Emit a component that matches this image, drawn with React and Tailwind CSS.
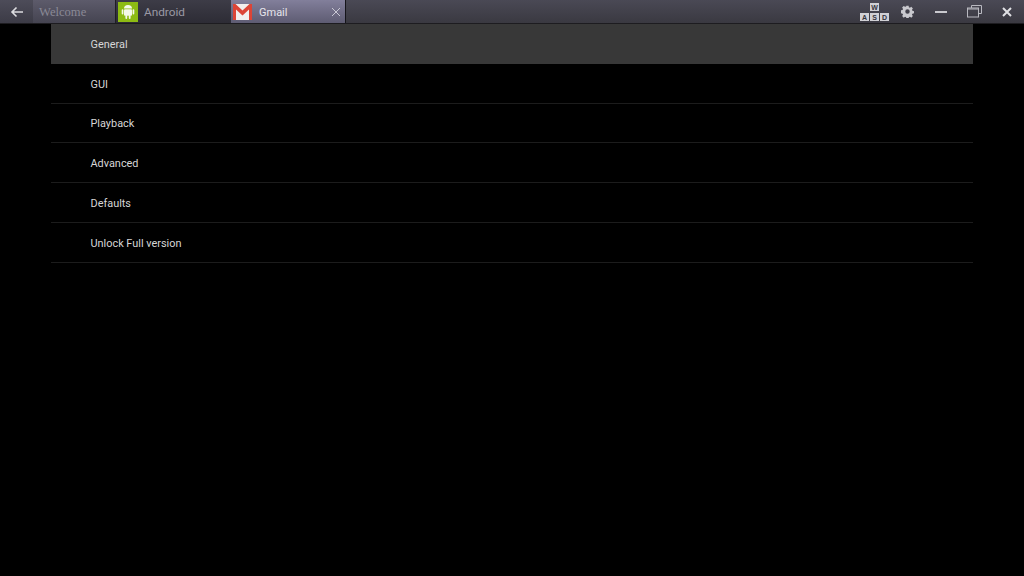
import React from "react";

const rows = ["General", "GUI", "Playback", "Advanced", "Defaults", "Unlock Full version"];

function Android() {
  return (
    <svg width="14" height="16" viewBox="0 0 14 16" fill="#f4f8e8">
      <path d="M3 4.600a4 3.600 0 0 1 8 0z" />
      <rect x="3" y="5.200" width="8" height="6.600" rx="1" />
      <rect x="0.700" y="5.200" width="1.700" height="5.200" rx="0.850" />
      <rect x="11.600" y="5.200" width="1.700" height="5.200" rx="0.850" />
      <rect x="4.400" y="11" width="1.800" height="4" rx="0.900" />
      <rect x="7.800" y="11" width="1.800" height="4" rx="0.900" />
    </svg>
  );
}

function Gmail() {
  return (
    <svg width="19" height="16" viewBox="0 0 19 16">
      <rect x="0" y="0" width="19" height="16" fill="#f2eeee" />
      <path d="M0 0h2.500L9.500 6.500 16.500 0H19v16h-3V5.500L9.500 11.500 3 5.500V16H0z" fill="#dc4437" />
    </svg>
  );
}

function Key({ children }) {
  return (
    <span className="flex h-[8px] w-[9px] items-center justify-center bg-[#d0d0d4] text-[7px] font-bold leading-none text-[#33323a] [font-family:'Liberation_Sans',sans-serif]">
      {children}
    </span>
  );
}

export default function App() {
  return (
    <div className="flex h-[576px] w-[1024px] flex-col overflow-hidden bg-black [font-family:Roboto,sans-serif]">
      <header className="flex h-[24px] shrink-0 items-stretch border-b border-[#1d1c20] bg-gradient-to-b from-[#4a4955] to-[#3a3941]">
        <div className="flex w-[33px] items-center justify-center bg-gradient-to-b from-[#4d4c59] to-[#3c3b46]">
          <svg width="14" height="12" viewBox="0 0 14 12" fill="none" stroke="#dcdce0" strokeWidth="1.600">
            <path d="M13 6H2M6.500 1.500 2 6l4.500 4.500" />
          </svg>
        </div>
        <div className="flex w-[82px] items-center bg-gradient-to-b from-[#5d5b6b] to-[#454451] pl-[6px] pt-[2px] text-[12.600px] text-[#8a8996] [font-family:'Liberation_Serif',serif]">
          Welcome
        </div>
        <div className="flex w-[116px] items-center gap-[6px] border-l border-[#1f1e24] bg-gradient-to-b from-[#3d3c47] to-[#2d2c35] pl-[2px] text-[11.800px] text-[#9a99a4]">
          <span className="flex h-[20px] w-[20px] items-center justify-center bg-[#8dbb13]">
            <Android />
          </span>
          <span className="pt-[2px]">Android</span>
        </div>
        <div className="flex w-[115px] items-center border-r border-[#15151a] bg-gradient-to-b from-[#827f9b] to-[#5e5c72] pl-[2px] pr-[4px] text-[11px] text-[#e6e6ec]">
          <Gmail />
          <span className="ml-[7px] flex-1 pt-[3px]">Gmail</span>
          <svg width="10" height="10" viewBox="0 0 10 10" stroke="#c9c8d4" strokeWidth="1">
            <path d="M1 1l8 8M9 1l-8 8" />
          </svg>
        </div>
        <div className="flex-1" />
        <div className="flex w-[164px] items-center">
          <div className="flex w-[29px] flex-col items-center gap-[2px] pt-[1px]">
            <Key>W</Key>
            <div className="flex gap-[1px]">
              <Key>A</Key>
              <Key>S</Key>
              <Key>D</Key>
            </div>
          </div>
          <svg className="ml-[12px]" width="13" height="13" viewBox="0 0 14 14">
            <path
              fill="#c9c9ce"
              fillRule="evenodd"
              d="M5.800.800h2.400l.3 1.700 1.100.5 1.500-1 1.700 1.700-1 1.500.5 1.100 1.700.3v2.400l-1.700.3-.5 1.100 1 1.500-1.700 1.700-1.500-1-1.100.5-.3 1.700H5.800l-.3-1.700-1.100-.5-1.500 1-1.700-1.700 1-1.500-.5-1.100-1.700-.3V5.600l1.700-.3.5-1.100-1-1.500 1.700-1.700 1.500 1 1.100-.5zM7 4.600a2.400 2.400 0 1 0 0 4.800 2.400 2.400 0 0 0 0-4.800z"
            />
          </svg>
          <span className="ml-[21px] h-[2px] w-[12px] bg-[#c9c9ce]" />
          <svg className="ml-[20px]" width="15" height="13" viewBox="0 0 15 13" fill="none" stroke="#b9b9c0" strokeWidth="1">
            <path d="M4.500 3V.5h10v8H12" />
            <rect x="0.500" y="3" width="11" height="9" />
            <path d="M1 4h10" />
          </svg>
          <svg className="ml-[20px]" width="10" height="10" viewBox="0 0 10 10" stroke="#e0e0e4" strokeWidth="2">
            <path d="M1 1l8 8M9 1l-8 8" />
          </svg>
        </div>
      </header>
      <main className="mx-[51px] flex flex-col">
        {rows.map((r, i) => (
          <div
            key={r}
            className={`flex h-[39.800px] items-center border-b pl-[39.500px] pt-[3px] text-[10.900px] text-[#d6d6d6] ${
              i === 0 ? "border-[#383838] bg-[#383838]" : "border-[#1c1c1c]"
            }`}
          >
            {r}
          </div>
        ))}
      </main>
    </div>
  );
}
